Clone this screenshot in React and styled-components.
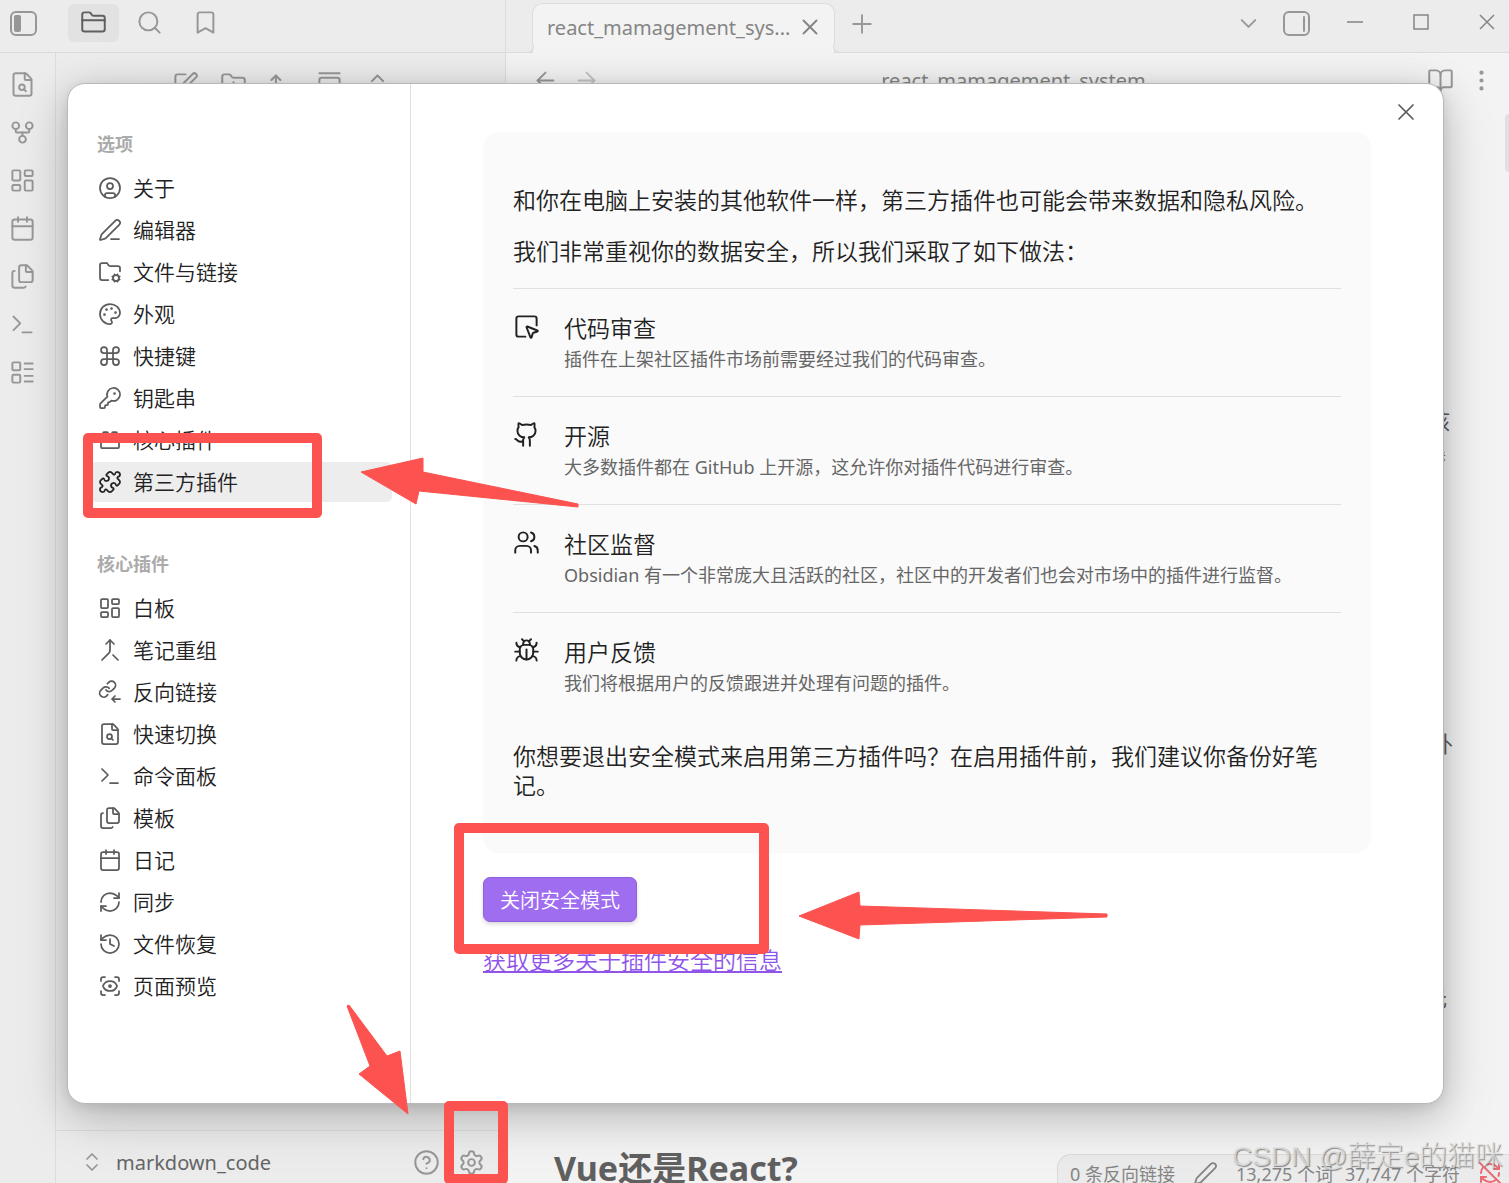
import React from 'react';
import styled, { createGlobalStyle } from 'styled-components';
import {
  ArrowLeft, ArrowRight, ArrowUpNarrowWide, BookOpen, Bookmark, Bug, Calendar,
  ChevronDown, ChevronsUpDown, CircleHelp, CircleUser, Command, EllipsisVertical,
  Files, FolderClosed, FolderCog, FolderPlus, GalleryVertical, GitFork, Github,
  History, KeyRound, LayoutDashboard, LayoutList, Merge, Palette, Pen, PenLine,
  Plus, Puzzle, RefreshCw, RefreshCwOff, ScanEye, Search, Settings,
  SquareMousePointer, SquarePen, Terminal, ToyBrick, Users, X,
} from 'lucide-react';

const GlobalStyle = createGlobalStyle`
  * {
    box-sizing: border-box;
  }

  body {
    margin: 0;
    color: #222222;
    font-family: 'Noto Sans', 'Noto Sans CJK SC', sans-serif;
    font-weight: 400;
  }

  button {
    padding: 0;
    border: 0;
    background: none;
    color: inherit;
    font: inherit;
    cursor: pointer;
  }

  svg {
    display: block;
    flex: none;
  }
`;

const Shell = styled.div`
  display: flex;
  position: relative;
  height: 100vh;
  overflow: hidden;
  color: #979797;
  background: #ececec;
`;

const Left = styled.div`
  display: flex;
  flex-direction: column;
  flex: none;
  width: 506px;
  border-right: 1px solid #dcdcdc;
`;

const LeftTop = styled.div`
  display: flex;
  align-items: center;
  height: 53px;
  padding: 0 9px 7px;
  border-bottom: 1px solid #dcdcdc;
`;

const SideTabs = styled.div`
  display: flex;
  gap: 5px;
  margin-left: 31px;
`;

const SideTab = styled.button`
  display: flex;
  align-items: center;
  justify-content: center;
  width: 51px;
  height: 38px;
  border-radius: 6px;
  color: ${props => (props.$active ? '#5f5f5f' : '#979797')};
  background: ${props => (props.$active ? '#e2e2e2' : 'transparent')};
`;

const LeftBody = styled.div`
  display: flex;
  flex: 1;
`;

const Ribbon = styled.nav`
  display: flex;
  flex-direction: column;
  gap: 21px;
  width: 56px;
  padding: 18px 9px;
  border-right: 1px solid #dcdcdc;
`;

const Explorer = styled.div`
  display: flex;
  flex: 1;
  flex-direction: column;
  justify-content: space-between;
`;

const ExplorerTools = styled.div`
  display: flex;
  justify-content: center;
  gap: 21px;
  padding: 18px 0 0 1px;
`;

const VaultBar = styled.div`
  display: flex;
  align-items: center;
  height: 53px;
  padding: 10px 20px 0 24px;
  border-top: 1px solid #dcdcdc;
`;

const VaultName = styled.button`
  display: flex;
  align-items: center;
  gap: 12px;
  margin-right: auto;
  color: #666666;
  font-size: 20px;

  svg {
    color: #979797;
  }
`;

const VaultActions = styled.div`
  display: flex;
  gap: 18px;
`;

const Main = styled.main`
  display: flex;
  position: relative;
  flex: 1;
  flex-direction: column;
  min-width: 0;
  background: #f3f3f3;
`;

const TabBar = styled.div`
  display: flex;
  flex: none;
  align-items: center;
  height: 53px;
  padding: 0 14px 0 26px;
  border-bottom: 1px solid #dcdcdc;
  background: #ececec;
`;

const Tab = styled.div`
  display: flex;
  position: relative;
  align-items: center;
  align-self: flex-end;
  justify-content: space-between;
  width: 303px;
  height: 50px;
  margin-bottom: -1px;
  padding: 0 11px 3px 14px;
  border: 1px solid #dcdcdc;
  border-bottom: 0;
  border-radius: 10px 10px 0 0;
  color: #858585;
  font-size: 20px;
  background: #f3f3f3;

  /* the rounded feet that run into the bar's bottom line */
  &::before,
  &::after {
    content: '';
    position: absolute;
    bottom: 0;
    width: 7px;
    height: 7px;
    border-bottom: 1px solid #dcdcdc;
    background: #ececec;
  }

  &::before {
    left: -7px;
    border-right: 1px solid #dcdcdc;
    border-bottom-right-radius: 7px;
  }

  &::after {
    right: -7px;
    border-left: 1px solid #dcdcdc;
    border-bottom-left-radius: 7px;
  }
`;

const NewTab = styled.button`
  margin: 0 auto 4px 12px;
`;

const BarActions = styled.div`
  display: flex;
  align-items: center;
  gap: 20px;
  padding-bottom: 6px;
`;

const WindowButtons = styled.div`
  display: flex;
  gap: 50px;
  margin-left: 37px;
  padding-bottom: 8px;
  color: #858585;
`;

const ViewHeader = styled.div`
  display: flex;
  flex: none;
  align-items: center;
  height: 54px;
  padding: 0 14px 0 26px;
`;

const ViewTools = styled.div`
  display: flex;
  gap: 14px;
`;

const ViewTitle = styled.div`
  flex: 1;
  color: #858585;
  font-size: 20px;
  text-align: center;
`;

const Faded = styled.button`
  opacity: 0.5;
`;

const Editor = styled.div`
  position: relative;
  flex: 1;
  min-height: 0;
  padding: 0 56px 0 48px;
  overflow: hidden;
  color: #5c5c5c;
`;

const EditorLine = styled.p`
  height: 30px;
  margin: ${props => props.$before}px 0 0;
  padding-right: ${props => props.$end}px;
  font-size: 22px;
  line-height: 30px;
  text-align: right;
`;

const EditorHeading = styled.h2`
  margin: 134px 0 0;
  color: #606060;
  font-size: 34px;
  font-weight: 700;
  line-height: 44px;
`;

const ScrollThumb = styled.div`
  position: absolute;
  top: 7px;
  right: 0;
  width: 4px;
  height: 58px;
  border-radius: 4px 0 0 4px;
  background: #e0e0e0;
`;

const StatusBar = styled.footer`
  display: flex;
  position: absolute;
  right: 0;
  bottom: 0;
  height: 29px;
  padding: 6px 7px 0 12px;
  overflow: hidden;
  border: solid #dadada;
  border-width: 1px 0 0 1px;
  border-radius: 14px 0 0 0;
  color: #858585;
  font-size: 18px;
  line-height: 26px;
  background: #ebebeb;
`;

const StatusItem = styled.span`
  margin-right: ${props => props.$after}px;
  color: ${props => props.$color || 'inherit'};
  white-space: nowrap;
`;

const Overlay = styled.div`
  display: flex;
  position: absolute;
  inset: 0;
  padding: 83px 65px 79px 67px;
`;

const Dialog = styled.section`
  display: flex;
  position: relative;
  flex: 1;
  min-width: 0;
  border: 1px solid #b8b8b8;
  border-radius: 18px;
  color: #222222;
  background: #ffffff;
  box-shadow: 0 3px 11px rgba(0, 0, 0, 0.08), 0 9px 37px rgba(0, 0, 0, 0.16),
    0 16px 60px rgba(0, 0, 0, 0.12);
`;

const CloseDialog = styled.button`
  position: absolute;
  top: 14px;
  right: 23px;
  color: #5c5c5c;
`;

const Nav = styled.nav`
  flex: none;
  width: 343px;
  padding: 48px 18px 0 22px;
  border-right: 1px solid #e0e0e0;
`;

const NavTitle = styled.h3`
  margin: 0 0 12px;
  padding-left: 7px;
  color: #ababab;
  font-size: 18px;
  font-weight: 700;
  line-height: 24px;
`;

const NavList = styled.div`
  display: flex;
  flex-direction: column;
  gap: 2px;
  margin-bottom: 50px;
`;

const NavItem = styled.button`
  display: flex;
  align-items: center;
  gap: 11px;
  height: 40px;
  padding: 0 8px;
  border-radius: 6px;
  color: #222222;
  font-size: 21px;
  font-weight: 350;
  line-height: 28px;
  text-align: left;
  background: ${props => (props.$active ? '#ededed' : 'transparent')};

  svg {
    color: ${props => (props.$active ? '#222222' : '#5c5c5c')};
  }
`;

const Content = styled.div`
  flex: 1;
  min-width: 0;
  padding: 48px 72px 0;
`;

const Card = styled.div`
  padding: 54px 30px 53px;
  border-radius: 16px;
  background: #fafafa;
`;

const Text = styled.p`
  margin: 0 0 22px;
  font-size: 23px;
  font-weight: 350;
  line-height: 29px;

  &:last-child {
    margin: 22px 0 0;
  }
`;

const Feature = styled.div`
  display: flex;
  gap: 24px;
  height: 108px;
  padding-top: 24px;
  border-top: 1px solid #e0e0e0;
`;

const FeatureTitle = styled.div`
  font-size: 23px;
  font-weight: 350;
  line-height: 30px;
`;

const FeatureText = styled.div`
  margin-top: 3px;
  color: #666666;
  font-size: 18px;
  line-height: 26px;
`;

const Primary = styled.button`
  display: block;
  height: 45px;
  margin: 24px 0;
  padding: 0 16px;
  border: 1px solid #8f60dc;
  border-radius: 7px;
  color: #ffffff;
  font-size: 20px;
  font-weight: 350;
  background: #9f6ef0;
  box-shadow: 0 2px 4px rgba(0, 0, 0, 0.16);
`;

const MoreLink = styled.a`
  color: #9054e8;
  font-size: 23px;
  font-weight: 350;
  line-height: 29px;
`;

const Marks = styled.svg`
  position: absolute;
  inset: 0;
  width: 100%;
  height: 100%;
  color: #fc5350;
  pointer-events: none;
`;

const Watermark = styled.div`
  position: absolute;
  right: 6px;
  bottom: 8px;
  color: rgba(225, 225, 225, 0.8);
  font-family: 'Liberation Sans', 'Noto Sans CJK SC', sans-serif;
  font-size: 28px;
  font-weight: 300;
  line-height: 36px;
  text-shadow: 1px 1px 1px rgba(110, 110, 110, 0.8);
  pointer-events: none;
`;

const Stroke = ({ size = 24, children }) => (
  <svg
    width={size}
    height={size}
    viewBox="0 0 24 24"
    fill="none"
    stroke="currentColor"
    strokeWidth="1.75"
    strokeLinecap="round"
    strokeLinejoin="round"
  >
    {children}
  </svg>
);

const FileFind = ({ size }) => (
  <Stroke size={size}>
    <path d="M6 22a2 2 0 0 1-2-2V4a2 2 0 0 1 2-2h8a2.4 2.4 0 0 1 1.7.7l3.6 3.6A2.4 2.4 0 0 1 20 8v12a2 2 0 0 1-2 2z" />
    <path d="M14 2v5a1 1 0 0 0 1 1h5" />
    <circle cx="11.5" cy="14.5" r="2.5" />
    <path d="M13.3 16.3 15 18" />
  </Stroke>
);

const LinkIn = ({ size }) => (
  <Stroke size={size}>
    <g transform="translate(0 -.4) scale(.8)" strokeWidth="2.2">
      <path d="M10 13a5 5 0 0 0 7.54.54l3-3a5 5 0 0 0-7.07-7.07l-1.72 1.71" />
      <path d="M14 11a5 5 0 0 0-7.54-.54l-3 3a5 5 0 0 0 7.07 7.07l1.71-1.71" />
    </g>
    <path d="M22 19h-8M17 16l-3 3 3 3" />
  </Stroke>
);

const PanelToggle = ({ right }) => (
  <svg width="28" height="28" viewBox="0 0 28 28" fill="none" stroke="currentColor" strokeWidth="2">
    <rect x="2" y="3" width="25" height="23" rx="5" />
    {right
      ? <path d="M22 8v14" strokeLinecap="round" />
      : <rect x="5" y="6" width="7" height="17" rx="2" fill="currentColor" stroke="none" />}
  </svg>
);

const WindowIcon = ({ d }) => (
  <svg width="16" height="16" viewBox="0 0 16 16" fill="none" stroke="currentColor" strokeWidth="1.5">
    <path d={d} />
  </svg>
);

const ribbon = [
  ['快速切换', FileFind],
  ['关系图谱', GitFork],
  ['白板', LayoutDashboard],
  ['日记', Calendar],
  ['模板', Files],
  ['命令面板', Terminal],
  ['列表', LayoutList],
];

const tools = [
  ['新建笔记', SquarePen],
  ['新建文件夹', FolderPlus],
  ['排序', ArrowUpNarrowWide],
  ['定位', GalleryVertical],
  ['展开', ChevronsUpDown],
];

const options = [
  ['关于', CircleUser],
  ['编辑器', PenLine],
  ['文件与链接', FolderCog],
  ['外观', Palette],
  ['快捷键', Command],
  ['钥匙串', KeyRound],
  ['核心插件', ToyBrick],
  ['第三方插件', Puzzle],
];

const corePlugins = [
  ['白板', LayoutDashboard],
  ['笔记重组', Merge],
  ['反向链接', LinkIn],
  ['快速切换', FileFind],
  ['命令面板', Terminal],
  ['模板', Files],
  ['日记', Calendar],
  ['同步', RefreshCw],
  ['文件恢复', History],
  ['页面预览', ScanEye],
];

const features = [
  [SquareMousePointer, '代码审查', '插件在上架社区插件市场前需要经过我们的代码审查。'],
  [Github, '开源', '大多数插件都在 GitHub 上开源，这允许你对插件代码进行审查。'],
  [Users, '社区监督', 'Obsidian 有一个非常庞大且活跃的社区，社区中的开发者们也会对市场中的插件进行监督。'],
  [Bug, '用户反馈', '我们将根据用户的反馈跟进并处理有问题的插件。'],
];

const icon = { size: 27, strokeWidth: 1.75 };

const NavGroup = ({ title, items, active }) => (
  <>
    <NavTitle>{title}</NavTitle>
    <NavList>
      {items.map(([label, Icon]) => (
        <NavItem key={label} $active={label === active}>
          <Icon size={24} strokeWidth={1.75} />
          {label}
        </NavItem>
      ))}
    </NavList>
  </>
);

const Sidebar = () => (
  <Left>
    <LeftTop>
      <button aria-label="折叠侧边栏"><PanelToggle /></button>
      <SideTabs>
        <SideTab $active aria-label="文件列表"><FolderClosed {...icon} /></SideTab>
        <SideTab aria-label="搜索"><Search {...icon} /></SideTab>
        <SideTab aria-label="书签"><Bookmark {...icon} /></SideTab>
      </SideTabs>
    </LeftTop>
    <LeftBody>
      <Ribbon>
        {ribbon.map(([label, Icon]) => (
          <button key={label} aria-label={label}><Icon {...icon} /></button>
        ))}
      </Ribbon>
      <Explorer>
        <ExplorerTools>
          {tools.map(([label, Icon]) => (
            <button key={label} aria-label={label}><Icon {...icon} /></button>
          ))}
        </ExplorerTools>
        <VaultBar>
          <VaultName>
            <ChevronsUpDown size={24} strokeWidth={1.75} />
            markdown_code
          </VaultName>
          <VaultActions>
            <button aria-label="帮助"><CircleHelp {...icon} /></button>
            <button aria-label="设置"><Settings {...icon} /></button>
          </VaultActions>
        </VaultBar>
      </Explorer>
    </LeftBody>
  </Left>
);

const Workspace = () => (
  <Main>
    <TabBar>
      <Tab>
        react_mamagement_sys...
        <button aria-label="关闭标签页"><X size={26} strokeWidth={1.75} /></button>
      </Tab>
      <NewTab aria-label="新标签页"><Plus size={30} strokeWidth={1.5} /></NewTab>
      <BarActions>
        <button aria-label="标签页列表"><ChevronDown {...icon} /></button>
        <button aria-label="右侧边栏"><PanelToggle right /></button>
      </BarActions>
      <WindowButtons>
        <button aria-label="最小化"><WindowIcon d="M0 8h16" /></button>
        <button aria-label="最大化"><WindowIcon d="M1 1h14v14H1z" /></button>
        <button aria-label="关闭"><WindowIcon d="M1 1l14 14M15 1L1 15" /></button>
      </WindowButtons>
    </TabBar>
    <ViewHeader>
      <ViewTools>
        <button aria-label="后退"><ArrowLeft {...icon} /></button>
        <Faded aria-label="前进"><ArrowRight {...icon} /></Faded>
      </ViewTools>
      <ViewTitle>react_mamagement_system</ViewTitle>
      <ViewTools>
        <button aria-label="阅读视图"><BookOpen {...icon} /></button>
        <button aria-label="更多选项"><EllipsisVertical {...icon} /></button>
      </ViewTools>
    </ViewHeader>
    <Editor>
      <ScrollThumb />
      <EditorLine $before={298} $end={3}>核</EditorLine>
      <EditorLine $before={0} $end={7}>集</EditorLine>
      <EditorLine $before={263} $end={0}>外</EditorLine>
      <EditorLine $before={224} $end={6}>元</EditorLine>
      <EditorHeading>Vue还是React?</EditorHeading>
    </Editor>
    <StatusBar>
      <StatusItem $after={18}>0 条反向链接</StatusItem>
      <StatusItem $after={18}><Pen size={25} strokeWidth={1.75} /></StatusItem>
      <StatusItem $after={12}>13,275 个词</StatusItem>
      <StatusItem $after={18}>37,747 个字符</StatusItem>
      <StatusItem $after={0} $color="#ec6a72"><RefreshCwOff size={24} strokeWidth={2} /></StatusItem>
    </StatusBar>
  </Main>
);

const SettingsDialog = () => (
  <Dialog role="dialog" aria-label="设置">
    <Nav>
      <NavGroup title="选项" items={options} active="第三方插件" />
      <NavGroup title="核心插件" items={corePlugins} />
    </Nav>
    <Content>
      <Card>
        <Text>和你在电脑上安装的其他软件一样，第三方插件也可能会带来数据和隐私风险。</Text>
        <Text>我们非常重视你的数据安全，所以我们采取了如下做法：</Text>
        {features.map(([Icon, title, text]) => (
          <Feature key={title}>
            <Icon {...icon} />
            <div>
              <FeatureTitle>{title}</FeatureTitle>
              <FeatureText>{text}</FeatureText>
            </div>
          </Feature>
        ))}
        <Text>你想要退出安全模式来启用第三方插件吗？在启用插件前，我们建议你备份好笔记。</Text>
      </Card>
      <Primary>关闭安全模式</Primary>
      <MoreLink href="#security">获取更多关于插件安全的信息</MoreLink>
    </Content>
    <CloseDialog aria-label="关闭设置"><X size={28} strokeWidth={1.5} /></CloseDialog>
  </Dialog>
);

// hand-drawn boxes and arrows that point at the steps
const Annotations = () => (
  <Marks aria-hidden="true">
    <g fill="none" stroke="currentColor" strokeWidth="10" strokeLinejoin="round">
      <rect x="88" y="438" width="229" height="75" />
      <rect x="459" y="828" width="305" height="121" />
      <rect x="449" y="1106" width="54" height="73" />
    </g>
    <g fill="currentColor" stroke="currentColor" strokeWidth="1" strokeLinejoin="round">
      <path d="M361 472 423 458V472L578 504V507L419 491 416 504Z" />
      <path d="M799 916 859 892 860 906 1107 914V917L860 925 859 939Z" />
      <path d="M347 1006 349 1005 387 1056 400 1051 408 1114 359 1074 370 1066Z" />
    </g>
  </Marks>
);

const App = () => (
  <Shell>
    <GlobalStyle />
    <Sidebar />
    <Workspace />
    <Overlay>
      <SettingsDialog />
    </Overlay>
    <Annotations />
    <Watermark>CSDN @薛定e的猫咪</Watermark>
  </Shell>
);

export default App;
